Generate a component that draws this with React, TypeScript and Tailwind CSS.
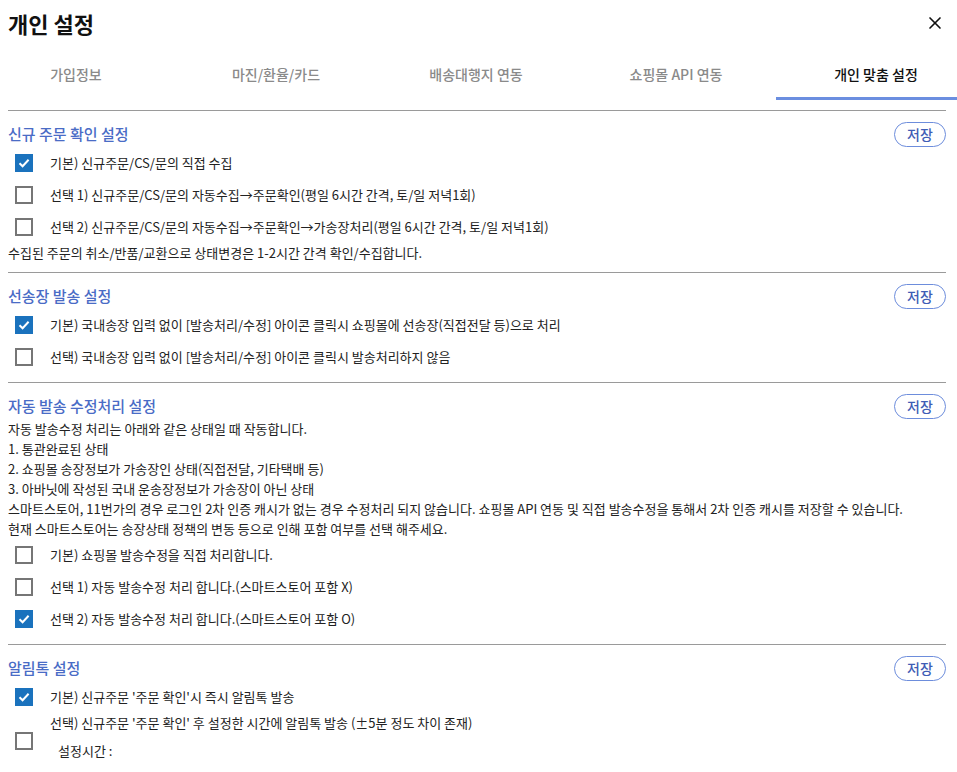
import { X } from 'lucide-react';

const FONT = { fontFamily: '"Noto Sans CJK KR", "Noto Sans", sans-serif' };

const tabs = ['가입정보', '마진/환율/카드', '배송대행지 연동', '쇼핑몰 API 연동', '개인 맞춤 설정'];

function Check({ checked }: { checked?: boolean }) {
  if (checked) {
    return (
      <span className="flex h-[18px] w-[18px] shrink-0 items-center justify-center bg-[#1a72bd]">
        <svg width="14" height="14" viewBox="0 0 14 14" fill="none">
          <path d="M2.5 7.2 L5.6 10.2 L11.6 3.8" stroke="white" strokeWidth="2" />
        </svg>
      </span>
    );
  }
  return <span className="h-[18px] w-[18px] shrink-0 border-2 border-[#767676] bg-white" />;
}

function Row({ checked, children }: { checked?: boolean; children: React.ReactNode }) {
  return (
    <div className="flex h-[32px] items-center pl-[7px]">
      <Check checked={checked} />
      <span className="ml-[17px]">{children}</span>
    </div>
  );
}

function Section({ title, children }: { title: string; children: React.ReactNode }) {
  return (
    <section className="border-t border-[#9a9a9a] pt-[11px] pb-[9px]">
      <div className="flex h-[25px] items-center justify-between">
        <h2 className="text-[15px] font-medium text-[#4a6cc6]">{title}</h2>
        <button className="flex h-[25px] w-[52px] items-center justify-center rounded-full border border-[#6d8ddc] text-[14px] font-medium text-[#3f5db5]">
          저장
        </button>
      </div>
      {children}
    </section>
  );
}

export default function App() {
  return (
    <div className="h-[772px] w-[957px] overflow-hidden bg-white text-[13px] text-[#222]" style={FONT}>
      <div className="flex h-[46px] items-center justify-between pl-[8px] pr-[12px]">
        <h1 className="text-[22px] font-bold text-[#111]">개인 설정</h1>
        <X size={20} strokeWidth={2} className="text-[#111]" />
      </div>
      <div className="ml-[-24px] flex w-[1000px]">
        {tabs.map((t, i) => (
          <div
            key={t}
            className={`flex h-[54px] w-[200px] items-center justify-center pt-[6px] text-[14px] font-medium ${
              i === 4 ? 'border-b-[3px] border-[#6b8ee0] text-[#111]' : 'border-b-[3px] border-transparent text-[#8a8a8a]'
            }`}
          >
            {t}
          </div>
        ))}
      </div>
      <div className="mx-[8px] mt-[10px] w-[938px]">
        <Section title="신규 주문 확인 설정">
          <Row checked>기본) 신규주문/CS/문의 직접 수집</Row>
          <Row>선택 1) 신규주문/CS/문의 자동수집→주문확인(평일 6시간 간격, 토/일 저녁1회)</Row>
          <Row>선택 2) 신규주문/CS/문의 자동수집→주문확인→가송장처리(평일 6시간 간격, 토/일 저녁1회)</Row>
          <p className="leading-[20px]">수집된 주문의 취소/반품/교환으로 상태변경은 1-2시간 간격 확인/수집합니다.</p>
        </Section>
        <Section title="선송장 발송 설정">
          <Row checked>기본) 국내송장 입력 없이 [발송처리/수정] 아이콘 클릭시 쇼핑몰에 선송장(직접전달 등)으로 처리</Row>
          <Row>선택) 국내송장 입력 없이 [발송처리/수정] 아이콘 클릭시 발송처리하지 않음</Row>
        </Section>
        <Section title="자동 발송 수정처리 설정">
          <div className="leading-[20px]">
            <p>자동 발송수정 처리는 아래와 같은 상태일 때 작동합니다.</p>
            <p>1. 통관완료된 상태</p>
            <p>2. 쇼핑몰 송장정보가 가송장인 상태(직접전달, 기타택배 등)</p>
            <p>3. 아바닛에 작성된 국내 운송장정보가 가송장이 아닌 상태</p>
            <p>
              스마트스토어, 11번가의 경우 로그인 2차 인증 캐시가 없는 경우 수정처리 되지 않습니다. 쇼핑몰 API 연동 및 직접
              발송수정을 통해서 2차 인증 캐시를 저장할 수 있습니다.
            </p>
            <p>현재 스마트스토어는 송장상태 정책의 변동 등으로 인해 포함 여부를 선택 해주세요.</p>
          </div>
          <Row>기본) 쇼핑몰 발송수정을 직접 처리합니다.</Row>
          <Row>선택 1) 자동 발송수정 처리 합니다.(스마트스토어 포함 X)</Row>
          <Row checked>선택 2) 자동 발송수정 처리 합니다.(스마트스토어 포함 O)</Row>
        </Section>
        <Section title="알림톡 설정">
          <Row checked>기본) 신규주문 '주문 확인'시 즉시 알림톡 발송</Row>
          <div className="flex items-center pl-[7px]">
            <Check />
            <div className="ml-[17px]">
              <p className="leading-[20px]">선택) 신규주문 '주문 확인' 후 설정한 시간에 알림톡 발송 (±5분 정도 차이 존재)</p>
              <p className="flex h-[36px] items-center pl-[8px]">설정시간 :</p>
            </div>
          </div>
        </Section>
      </div>
    </div>
  );
}
